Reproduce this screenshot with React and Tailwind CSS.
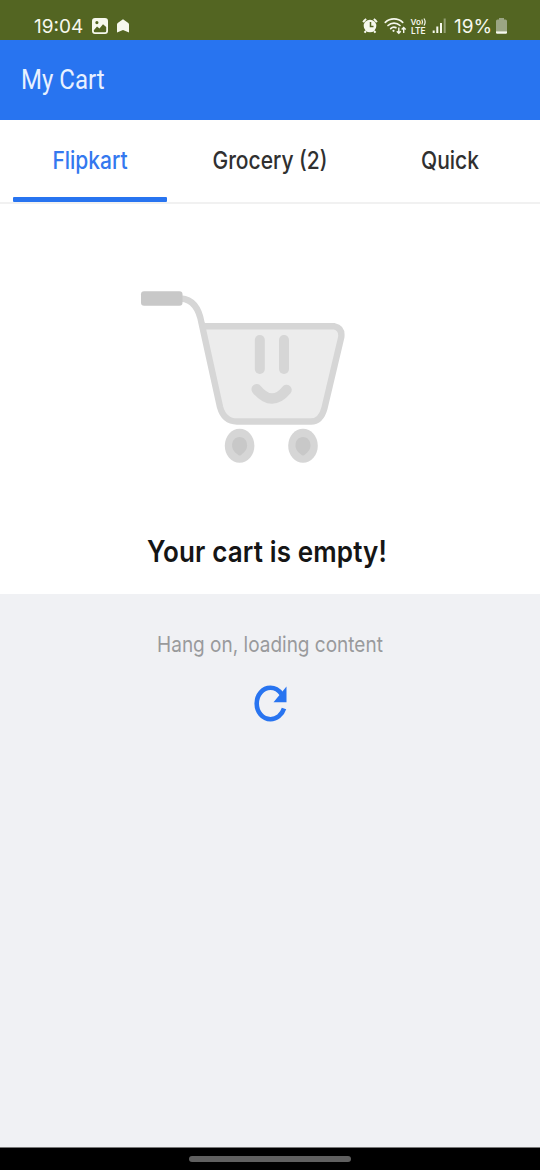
function ImageIcon() {
  return (
    <svg viewBox="0 0 16 16" className="h-4 w-4">
      <path
        fillRule="evenodd"
        fill="#f6f8ee"
        d="M3 0h10a3 3 0 0 1 3 3v10a3 3 0 0 1-3 3H3a3 3 0 0 1-3-3V3a3 3 0 0 1 3-3ZM1.8 12.2V13A1.2 1.2 0 0 0 3 14.200h10a1.200 1.200 0 0 0 1.200-1.200V9L11 6.200 7.500 10.600 5 8.400ZM4.900 3a1.600 1.600 0 1 0 0 3.200 1.600 1.600 0 0 0 0-3.200Z"
      />
    </svg>
  );
}

function HomeIcon() {
  return (
    <svg viewBox="0 0 12 14" className="h-3.5 w-3">
      <path fill="#f6f8ee" d="M6 .3 11.300 4q.7.600.7 1.400V13.500L6 11 0 13.500V5.400Q0 4.600.7 4Z" />
    </svg>
  );
}

function SystemIcons() {
  return (
    <svg viewBox="360 14 90 24" className="h-6 w-[90px]" fill="none" stroke="#f6f8ee">
      <circle cx="370" cy="26" r="6.300" fill="#f6f8ee" stroke="none" />
      <path d="M363.200 22.300a9 9 0 0 1 3-3.300M376.800 22.300a9 9 0 0 0-3-3.300M366 31l-1.500 1.700M374 31l1.500 1.700" strokeWidth="2" />
      <path d="M370.500 22v4.500h3" stroke="#536522" strokeWidth="1.500" />
      <g strokeWidth="1.700" strokeLinecap="round">
        <path d="M385.300 22.400a12.500 12.500 0 0 1 17.400 0M388 25.500a8.600 8.600 0 0 1 12 0M390.700 28.600a4.700 4.700 0 0 1 5.200-1" />
      </g>
      <circle cx="393.500" cy="30.800" r="1.100" fill="#f6f8ee" stroke="none" />
      <path d="M398.800 27.500v5.500M396.800 31.200l2 2 2-2M403.700 33v-5.300M401.700 29.600l2-2 2 2" strokeWidth="1.400" />
      <g fill="#f6f8ee" stroke="none" className="font-['Inter',sans-serif] font-semibold">
        <text x="410.500" y="24.600" fontSize="8" textLength="10.500" lengthAdjust="spacingAndGlyphs">Vo</text>
        <text x="411" y="33.600" fontSize="8.500" textLength="14.500" lengthAdjust="spacingAndGlyphs">LTE</text>
      </g>
      <path d="M421.800 19.500q1.500 2.500 0 5M424 18.500q2.300 3.500 0 7" strokeWidth="1.200" />
      <path d="M433.700 30.500v2.500M437.300 26.500v6.500M441 23v10" strokeWidth="2" />
      <path d="M444.700 18.500V33" strokeWidth="2" opacity=".4" />
    </svg>
  );
}

function BatteryIcon() {
  return (
    <svg viewBox="0 0 11 16" className="h-4 w-[11px]">
      <path d="M3 0h5v1.500h1.500Q11 1.500 11 3v10.300H0V3q0-1.500 1.500-1.500H3Z" fill="#9ba584" />
      <path d="M0 13.300h11v1.200q0 1.200-1.200 1.200H1.200Q0 15.700 0 14.500Z" fill="#f6f8ee" />
    </svg>
  );
}

function CartDrawing() {
  return (
    <svg viewBox="130 280 230 195" className="ml-[130px] h-[195px] w-[230px] shrink-0" fill="none">
      <path
        d="M203 326.300H335.500Q343.500 328 341.200 337.500L324.500 408Q321 421.500 311 421.500H237Q224 421.500 220 407Z"
        fill="#ececec"
      />
      <path
        d="M181 298.500C193 299.500 199 308 201.500 323L220 407Q224 421.500 237 421.500H311Q321 421.500 324.500 408L341.200 337.500Q342.500 328 334.500 326.300H203"
        stroke="#d6d6d6"
        strokeWidth="6.400"
      />
      <rect x="141" y="291.300" width="41.500" height="14.500" rx="3" fill="#c8c8c8" />
      <rect x="254.800" y="335" width="10" height="39" rx="4.900" fill="#d6d6d6" />
      <rect x="279" y="335" width="10" height="39" rx="4.900" fill="#d6d6d6" />
      <path d="M256.700 389.300Q272 407.500 286.500 390" stroke="#d6d6d6" strokeWidth="10.500" strokeLinecap="round" />
      <g fill="#d6d6d6">
        <ellipse cx="239.600" cy="445.800" rx="14.800" ry="17" />
        <ellipse cx="303" cy="445.800" rx="14.800" ry="17" />
      </g>
      <g fill="#c8c8c8">
        <path d="M239.600 437c4.500 0 7.500 3.500 7.500 8.500 0 4-2.500 6.500-5 8.500q-2.500 3-5 0c-2.500-2-5-4.500-5-8.500 0-5 3-8.500 7.500-8.500Z" />
        <path d="M303 437c4.500 0 7.500 3.500 7.500 8.500 0 4-2.500 6.500-5 8.500q-2.500 3-5 0c-2.500-2-5-4.500-5-8.500 0-5 3-8.500 7.500-8.500Z" />
      </g>
    </svg>
  );
}

function ReloadIcon() {
  return (
    <svg viewBox="0 0 34 38" className="mt-[23px] h-[38px] w-[34px]" fill="none">
      <path d="M31 24.500C29 31 23.500 35.200 17.500 35.200 9.500 35.200 3.700 28 3.700 19.500S9.500 3.800 17.500 3.800C22.500 3.800 26 6.500 28.500 10" stroke="#2874f0" strokeWidth="4.600" />
      <path d="M33.500 2.500V18.300H20.500Z" fill="#2874f0" />
    </svg>
  );
}

function Tab({ label, active }) {
  return (
    <button className={`flex flex-1 justify-center ${active ? "text-[#3478ef]" : "text-[#303030]"}`}>
      <span className="mt-[25px] h-8 scale-y-[1.15] text-[21px] leading-8 font-medium whitespace-nowrap">{label}</span>
    </button>
  );
}

export default function App() {
  return (
    <div className="flex h-[1170px] w-[540px] flex-col overflow-hidden bg-[#f0f1f4] font-['Inter',sans-serif]">
      <div className="flex h-10 shrink-0 bg-[#536522] pl-[34px] text-[#f6f8ee]">
        <span className="mt-[15px] h-6 w-[58px] text-[19px] leading-6">19:04</span>
        <div className="mt-[18px]"><ImageIcon /></div>
        <div className="mt-[19px] ml-[9px]"><HomeIcon /></div>
        <div className="mt-[14px] ml-[231px]"><SystemIcons /></div>
        <span className="mt-[15px] ml-1 h-6 w-[42px] text-[19px] leading-6">19%</span>
        <div className="mt-[18px]"><BatteryIcon /></div>
      </div>

      <header className="flex h-20 shrink-0 items-center bg-[#2874f0] pl-[21px]">
        <h1 className="scale-y-[1.15] font-['Roboto',sans-serif] text-2xl text-[#e8f1ff]">My Cart</h1>
      </header>

      <nav className="flex h-[82px] shrink-0 bg-white">
        <Tab label="Flipkart" active />
        <Tab label="Grocery (2)" />
        <Tab label="Quick" />
      </nav>
      <div className="flex h-[3px] shrink-0 flex-col justify-end bg-white">
        <div className="-mb-px h-[3px] bg-[#f1f1f1]" />
        <div className="-mt-[6px] mb-[3px] ml-[13px] h-[5px] w-[154px] shrink-0 rounded-[1px] bg-[#2874f0]" />
      </div>

      <main className="flex h-[389px] shrink-0 flex-col bg-white pt-[75px]">
        <CartDrawing />
        <h2 className="mt-[57px] ml-[147px] h-10 origin-left scale-y-[1.13] text-[26px] leading-10 font-semibold tracking-[0.13px] whitespace-nowrap text-[#151515]">
          Your cart is empty!
        </h2>
      </main>

      <section className="flex flex-1 flex-col items-center pt-[35px]">
        <p className="h-8 scale-y-[1.13] text-[19px] leading-8 whitespace-nowrap text-[#999a9c]">Hang on, loading content</p>
        <ReloadIcon />
      </section>

      <footer className="flex h-[23px] shrink-0 items-center justify-center border-t border-[#777] bg-black">
        <div className="h-1.5 w-[162px] rounded-full bg-[#606060]" />
      </footer>
    </div>
  );
}
